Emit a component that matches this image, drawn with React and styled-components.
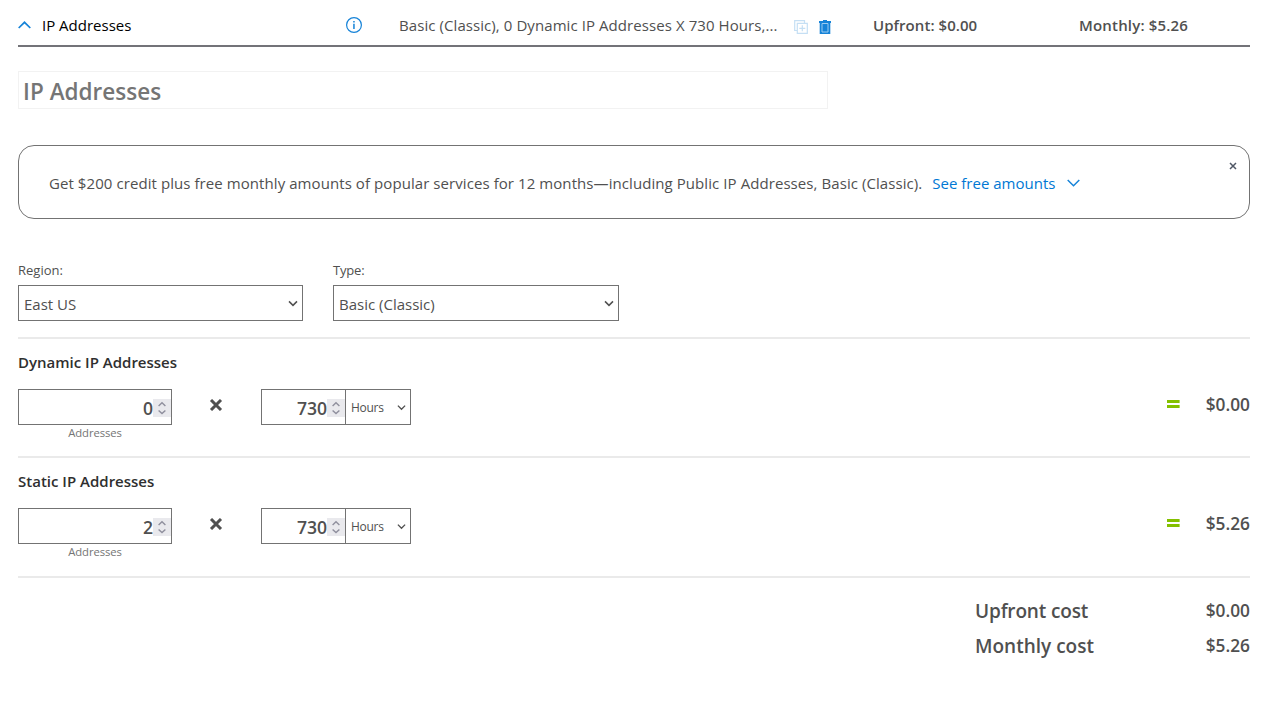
import React from "react";
import styled, { createGlobalStyle } from "styled-components";

const GlobalStyle = createGlobalStyle`
  * { box-sizing: border-box; }
  body {
    margin: 0;
    background: #fff;
    color: #505050;
    font-family: "Open Sans", "Noto Sans", sans-serif;
    font-size: 15px;
    line-height: 20px;
  }
`;

const Page = styled.main`
  width: 1266px;
  height: 701px;
  padding: 0 16px 0 18px;
  overflow: hidden;
`;

const Label = styled.span`
  display: inline-block;
  white-space: nowrap;
  letter-spacing: ${(p) => p.$track || 0}px;
`;

const Header = styled.header`
  display: grid;
  grid-template-columns: 24px 304px 53px 395px 25px 54px 206px 1fr;
  align-items: center;
  height: 47px;
  border-bottom: 2px solid #737378;
`;

const ModuleName = styled(Label)`
  color: #000;
  padding-top: 5px;
`;

const Summary = styled(Label)`
  padding-top: 5px;
`;

const HeaderCost = styled(Label)`
  padding-top: 5px;
  font-weight: 600;
`;

const HeaderIcon = styled.svg`
  display: block;
  margin-top: ${(p) => p.$top || 0}px;
`;

const TitleField = styled.div`
  display: flex;
  align-items: center;
  width: 810px;
  height: 38px;
  margin-top: 24px;
  padding: 4px 4px 0;
  border: 1px solid #f2f2f2;
  color: #757575;
  font-size: 22.5px;
  font-weight: 600;
`;

const Promo = styled.section`
  display: flex;
  align-items: center;
  height: 74px;
  margin-top: 36px;
  padding: 2px 12px 0 30px;
  border: 1px solid #737373;
  border-radius: 16px;
`;

const PromoLink = styled.a`
  display: flex;
  align-items: center;
  gap: 12px;
  margin-left: 10px;
  color: #0078d4;
`;

const CloseIcon = styled.svg`
  margin: 0 0 34px auto;
`;

const Fields = styled.div`
  display: flex;
  gap: 30px;
  height: 118px;
  padding-top: 39px;
  border-bottom: 2px solid #eaeaea;
  margin-top: 2px;
`;

const Field = styled.div`
  width: ${(p) => p.$width}px;
`;

const FieldLabel = styled.div`
  height: 25px;
  font-size: 13px;
  line-height: 20px;
`;

const SelectBox = styled.div`
  display: flex;
  align-items: center;
  justify-content: space-between;
  height: 36px;
  padding: 2px 4px 0 5px;
  border: 1px solid #737373;
`;

const Chevron = styled.svg`
  display: block;
  margin-top: -1px;
`;

const CostSection = styled.section`
  height: ${(p) => p.$height}px;
  padding-top: 13px;
  border-bottom: 2px solid #eaeaea;
`;

const SectionTitle = styled.h2`
  margin: 0;
  height: 37px;
  color: #2f2f2f;
  font-size: 15px;
  line-height: 20px;
  font-weight: 600;
`;

const Equation = styled.div`
  display: flex;
  align-items: flex-start;
`;

const Quantity = styled.div`
  width: 154px;
  text-align: center;
  color: #757575;
  font-size: 11.3px;
  line-height: 16px;
`;

const NumberBox = styled.div`
  display: flex;
  align-items: center;
  justify-content: flex-end;
  width: ${(p) => p.$width}px;
  height: 36px;
  padding-top: 2px;
  border: 1px solid #737373;
  color: #505050;
  font-size: 17.6px;
  line-height: 24px;
  font-weight: 600;
`;

const Spinner = styled.svg`
  display: block;
  background: #e9e9ed;
`;

const Times = styled.svg`
  margin: 10px 38px 0 37px;
`;

const UnitBox = styled.div`
  display: flex;
  align-items: center;
  justify-content: space-between;
  width: 66px;
  height: 36px;
  margin-left: -1px;
  padding: 1px 4px 0 5px;
  border: 1px solid #737373;
  font-size: 12px;
`;

const Result = styled.div`
  display: flex;
  align-items: center;
  gap: 26px;
  height: 32px;
  margin-left: auto;
  font-size: 17px;
  font-weight: 600;
`;

const EqualsIcon = styled.svg`
  margin-bottom: 2px;
`;

const Totals = styled.div`
  display: flex;
  flex-direction: column;
  width: 275px;
  margin-left: auto;
  padding-top: 15px;
`;

const TotalRow = styled.div`
  display: flex;
  justify-content: space-between;
  align-items: center;
  height: 35px;
  font-size: 19px;
  font-weight: 600;
`;

const Amount = styled(Label)`
  font-size: 17.3px;
`;

function SmallChevron({ size = 10 }) {
  return (
    <Chevron width={size} height="7" viewBox="0 0 10 7" fill="none" stroke="#505050" strokeWidth="1.5">
      <path d="M1 1.4 5 5.4 9 1.4" />
    </Chevron>
  );
}

function NumberField({ value, width }) {
  return (
    <NumberBox $width={width}>
      <Label $track={-0.1}>{value}</Label>
      <Spinner width="18" height="18" fill="none" stroke="#8f8f9d" strokeWidth="1.4">
        <path d="M5.6 6.9 9 3.7l3.4 3.2M5.6 11.4 9 14.6l3.4-3.2" />
      </Spinner>
    </NumberBox>
  );
}

function CostRow({ title, count, amount, height }) {
  return (
    <CostSection $height={height}>
      <SectionTitle><Label>{title}</Label></SectionTitle>
      <Equation>
        <Quantity>
          <NumberField value={count} width={154} />
          <Label $track={-0.1}>Addresses</Label>
        </Quantity>
        <Times width="14" height="12" fill="none" stroke="#505050" strokeWidth="3">
          <path d="M2 1 12 11M12 1 2 11" />
        </Times>
        <NumberField value="730" width={85} />
        <UnitBox>
          <Label $track={-0.3}>Hours</Label>
          <SmallChevron size={9} />
        </UnitBox>
        <Result>
          <EqualsIcon width="13" height="8" fill="#84c000"><path d="M0 0h12.6v3H0zM0 5h12.6v3H0z" /></EqualsIcon>
          <Amount>{amount}</Amount>
        </Result>
      </Equation>
    </CostSection>
  );
}

export default function App() {
  return (
    <>
      <GlobalStyle />
      <Page>
        <Header>
          <HeaderIcon $top={4} width="13" height="8" fill="none" stroke="#1683d8" strokeWidth="1.7">
            <path d="M.7 7 6.5 1.3 12.3 7" />
          </HeaderIcon>
          <ModuleName>IP Addresses</ModuleName>
          <HeaderIcon $top={5} width="17" height="17" viewBox="0 0 17 17">
            <circle cx="8" cy="8" r="7.4" fill="none" stroke="#1683d8" strokeWidth="1.2" />
            <path d="M7.2 4h1.5v1.6H7.2zM7.2 6.8h1.5v5.1H7.2z" fill="#1683d8" />
          </HeaderIcon>
          <Summary $track={0.075}>Basic (Classic), 0 Dynamic IP Addresses X 730 Hours,...</Summary>
          <HeaderIcon $top={9} width="14" height="14" fill="none" stroke="#c5dff4" strokeWidth="1.2">
            <path d="M3 10.5H.7V.7h9.8V3M3.3 3.3h10v10h-10zM8.3 5.3v6M5.3 8.3h6" />
          </HeaderIcon>
          <HeaderIcon $top={9} width="12" height="14">
            <path d="M0 1h4V0h4v1h4v2h-.7v11H.7V3H0z" fill="#1683d8" />
            <path d="M3 3.5h6v8.5h-6z" fill="none" stroke="#9bcbf0" />
          </HeaderIcon>
          <HeaderCost $track={0.06}>Upfront: $0.00</HeaderCost>
          <HeaderCost $track={0.18}>Monthly: $5.26</HeaderCost>
        </Header>

        <TitleField><Label $track={0.03}>IP Addresses</Label></TitleField>

        <Promo>
          <Label $track={0.074}>
            Get $200 credit plus free monthly amounts of popular services for 12 months—including Public IP Addresses, Basic (Classic).
          </Label>
          <PromoLink>
            <Label>See free amounts</Label>
            <Chevron width="13" height="8" fill="none" stroke="#1683d8" strokeWidth="1.5">
              <path d="M.7 1 6.5 6.7 12.3 1" />
            </Chevron>
          </PromoLink>
          <CloseIcon width="8" height="8" fill="none" stroke="#505866" strokeWidth="1.5">
            <path d="M1 1l6 6M7 1 1 7" />
          </CloseIcon>
        </Promo>

        <Fields>
          <Field $width={285}>
            <FieldLabel><Label>Region:</Label></FieldLabel>
            <SelectBox><Label>East US</Label><SmallChevron /></SelectBox>
          </Field>
          <Field $width={286}>
            <FieldLabel><Label $track={-0.2}>Type:</Label></FieldLabel>
            <SelectBox><Label>Basic (Classic)</Label><SmallChevron /></SelectBox>
          </Field>
        </Fields>

        <CostRow title="Dynamic IP Addresses" count="0" amount="$0.00" height={119} />
        <CostRow title="Static IP Addresses" count="2" amount="$5.26" height={120} />

        <Totals>
          <TotalRow><Label $track={-0.15}>Upfront cost</Label><Amount>$0.00</Amount></TotalRow>
          <TotalRow><Label>Monthly cost</Label><Amount>$5.26</Amount></TotalRow>
        </Totals>
      </Page>
    </>
  );
}
